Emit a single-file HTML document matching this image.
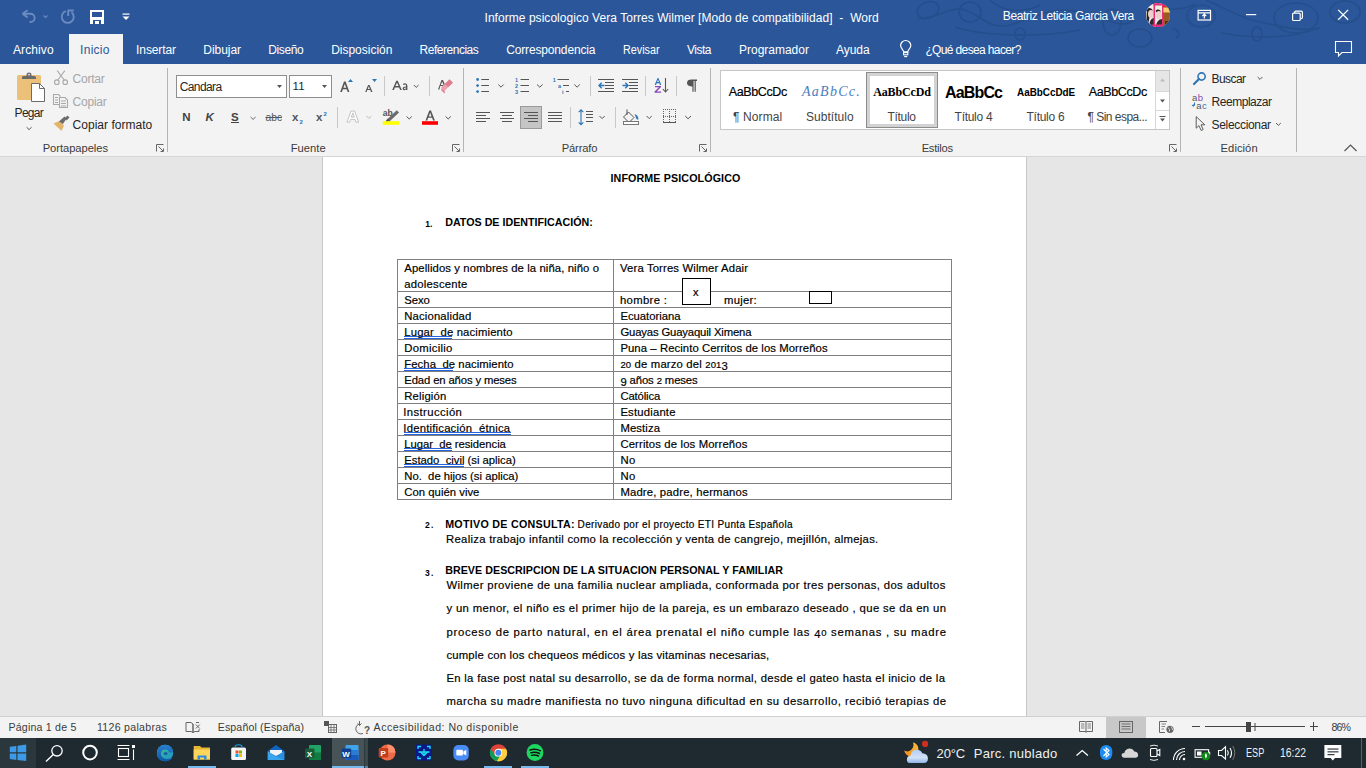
<!DOCTYPE html>
<html><head><meta charset="utf-8"><title>Word</title>
<style>
*{margin:0;padding:0;box-sizing:border-box}
html,body{width:1366px;height:768px;overflow:hidden;background:#E6E6E6;font-family:"Liberation Sans",sans-serif}
.a{position:absolute}
.tx{position:absolute;white-space:pre;line-height:1}
.dk{-webkit-text-stroke:0.18px currentColor}
.sv{position:absolute;overflow:visible}
.os{font-size:84%}
.od{position:relative;top:2.2px}
.oa{font-size:92%}
</style></head><body>
<!-- title bar + tabs -->
<div class="a" style="left:0;top:0;width:1366px;height:64px;background:#2B579A"></div>
<div class="a" style="left:69px;top:34px;width:54px;height:30px;background:#F3F3F3"></div>
<!-- ribbon -->
<div class="a" style="left:0;top:64px;width:1366px;height:92px;background:#F3F3F3"></div>
<div class="a" style="left:0;top:156px;width:1366px;height:1px;background:#D5D5D5"></div>
<!-- page -->
<div class="a" style="left:322px;top:157px;width:705px;height:560px;background:#fff;border-left:1px solid #C6C6C6;border-right:1px solid #C6C6C6"></div>
<!-- status bar -->
<div class="a" style="left:0;top:716px;width:1366px;height:1px;background:#D0D0D0"></div>
<div class="a" style="left:0;top:717px;width:1366px;height:21px;background:#F3F3F3"></div>
<!-- taskbar -->
<div class="a" style="left:0;top:738px;width:1366px;height:30px;background:#1E2A2F"></div>
<!-- ===== QAT ===== -->
<svg class="sv" style="left:0;top:0" width="140" height="34" viewBox="0 0 140 34">
  <g fill="none" stroke="#6A8AC0" stroke-width="1.9" stroke-linejoin="round">
    <path d="M22.5 13.8 L27.6 10.3 M22.5 13.8 L27.6 17.4 M23 13.8 H30.5 A4.1 4.1 0 0 1 30.5 22 H29.5"/>
    <path d="M43.5 15.5 L45.5 17.5 L47.5 15.5" stroke-width="1.3" stroke="#5F84C4"/>
    <path d="M65.8 11.2 A6 6 0 1 0 71.6 12.3"/>
    <path d="M68.2 16 V10.5 H73.8"/>
  </g>
  <g fill="#fff">
    <path d="M90 10 H104 V24 H90 Z M92 12 V17 H102 V12 Z M93 20 V24 H101 V20 Z M95 21 H99 V24 H95 Z" fill-rule="evenodd"/>
    <rect x="122.5" y="13.5" width="7" height="1.2"/>
    <path d="M122.5 16.5 H129.5 L126 20 Z"/>
  </g>
</svg>
<!-- swirl decoration -->
<svg class="sv" style="left:0;top:0" width="1366" height="64" viewBox="0 0 1366 64">
  <g fill="none" stroke="#244C88" stroke-width="1.7" opacity="0.75">
    <ellipse cx="928" cy="10" rx="11" ry="8" transform="rotate(-20 928 10)"/>
    <path d="M918 18 C930 22 950 5 965 10 S990 30 1010 25 S1050 5 1080 12 S1120 30 1135 20"/>
    <ellipse cx="970" cy="12" rx="11" ry="10"/>
    <path d="M955 27 C980 36 1040 38 1080 30"/>
    <ellipse cx="1020" cy="34" rx="5" ry="6"/>
    <path d="M990 0 C1000 10 1020 15 1040 5"/>
    <ellipse cx="1112" cy="22" rx="9" ry="13"/>
    <ellipse cx="1140" cy="38" rx="12" ry="9"/>
    <path d="M1172 28 C1178 30 1182 35 1176 38"/>
    <ellipse cx="1201" cy="16" rx="14" ry="11"/>
    <path d="M1206 0 C1225 8 1240 18 1260 22 S1300 32 1320 28"/>
    <ellipse cx="1257" cy="34" rx="5" ry="7"/>
    <path d="M1221 33 C1250 38 1290 40 1318 28"/>
    <ellipse cx="1296" cy="18" rx="22" ry="15"/>
    <ellipse cx="1345" cy="12" rx="15" ry="11"/>
    <path d="M1150 0 C1160 10 1180 12 1195 4"/>
  </g>
</svg>
<!-- window controls -->
<svg class="sv" style="left:1180px;top:0" width="186" height="34" viewBox="1180 0 186 34">
  <g fill="none" stroke="#fff" stroke-width="1.2">
    <rect x="1198.1" y="10.4" width="12.4" height="9.6"/>
    <path d="M1198 12.8 H1210.6 M1204.3 18.6 V14.2 M1202.3 16.2 L1204.3 14.2 L1206.3 16.2"/>
    <path d="M1246 14.6 H1256.2"/>
    <rect x="1292.6" y="13.1" width="7.6" height="7.4" rx="1"/>
    <path d="M1294.6 13 V12.3 Q1294.6 11.1 1295.8 11.1 H1301.2 Q1302.4 11.1 1302.4 12.3 V17.4 Q1302.4 18.6 1301.2 18.6 H1300.3"/>
    <path d="M1338.2 9.9 L1348.1 19.8 M1348.1 9.9 L1338.2 19.8" stroke-width="1.3"/>
  </g>
</svg>
<!-- avatar -->
<svg class="sv" style="left:1146px;top:3px" width="24" height="24" viewBox="0 0 24 24">
  <defs><clipPath id="av"><circle cx="12" cy="12" r="12"/></clipPath></defs>
  <g clip-path="url(#av)">
    <rect width="24" height="24" fill="#F2E8E4"/>
    <rect x="0" y="0" width="8" height="24" fill="#F4ECE6"/>
    <rect x="9" y="3" width="8" height="5" fill="#EAF2DC"/>
    <rect x="17" y="0" width="7" height="24" fill="#C98A3A"/>
    <rect x="17" y="5" width="7" height="4" fill="#F2D070"/>
    <path d="M17 10 H24 V24 H17 Z" fill="#9A5A22"/>
    <path d="M19 18 H24 V24 H19 Z" fill="#5A2E12"/>
    <path d="M1 6 C3 4 6 5 7 8 L4 12 L2 22 H0 Z" fill="#2A2222"/>
    <ellipse cx="5" cy="11" rx="3" ry="4" fill="#EBCFC8"/>
    <path d="M3 24 C3 19 5 15 8 15 V24 Z" fill="#2E2A30"/>
    <path d="M9.5 8 C11 6 14 6 15 9 L13 12 Z" fill="#2A2222"/>
    <ellipse cx="13" cy="12" rx="3" ry="4" fill="#EBCFC8"/>
    <path d="M10 24 C10 19 13 16 16 16 V24 Z" fill="#2E2A30"/>
    <rect x="7.5" y="0" width="1.6" height="24" fill="#E8307A"/>
    <rect x="16" y="0" width="1.4" height="24" fill="#E8307A"/>
    <rect x="7.5" y="0" width="10" height="2.5" fill="#E8307A"/>
    <rect x="6" y="21.5" width="12" height="3" fill="#E8307A"/>
    <rect x="17" y="0" width="7" height="4" fill="#E02040"/>
  </g>
</svg>
<!-- tabs row icons -->
<svg class="sv" style="left:890px;top:34px" width="30" height="30" viewBox="890 34 30 30">
  <g fill="none" stroke="#fff" stroke-width="1.1">
    <path d="M903.6 51.8 C903.4 49.6 900.6 48.3 900.6 45.6 A5.1 5.1 0 0 1 910.8 45.6 C910.8 48.3 908 49.6 907.8 51.8 Z" stroke-width="1.2"/><rect x="903.6" y="52.6" width="4.2" height="2.2" stroke-width="1.1"/><path d="M904.2 56.6 H907.2" stroke-width="1.2"/>
  </g>
</svg>
<svg class="sv" style="left:1330px;top:36px" width="30" height="26" viewBox="1330 36 30 26">
  <path d="M1335.5 41.5 H1351.5 V52.5 H1342 L1338.5 56 V52.5 H1335.5 Z" fill="none" stroke="#fff" stroke-width="1.1"/>
</svg>
<!-- ===== RIBBON separators & group launchers ===== -->
<div class="a" style="left:167px;top:68px;width:1px;height:84px;background:#B4B4B4"></div>
<div class="a" style="left:463px;top:68px;width:1px;height:84px;background:#B4B4B4"></div>
<div class="a" style="left:710px;top:68px;width:1px;height:84px;background:#B4B4B4"></div>
<div class="a" style="left:1180px;top:68px;width:1px;height:84px;background:#B4B4B4"></div>
<div class="a" style="left:1296px;top:68px;width:1px;height:84px;background:#B4B4B4"></div>
<svg class="sv" style="left:0;top:64px" width="1366" height="92" viewBox="0 64 1366 92">
  <g fill="none" stroke="#666" stroke-width="1">
    <path d="M156.5 151.5 V144.5 H163.5 M158.5 146.5 L163 151 M163.5 148.5 V151.5 H160.5"/>
    <path d="M452.5 151.5 V144.5 H459.5 M454.5 146.5 L459 151 M459.5 148.5 V151.5 H456.5"/>
    <path d="M699.5 151.5 V144.5 H706.5 M701.5 146.5 L706 151 M706.5 148.5 V151.5 H703.5"/>
    <path d="M1169.5 151.5 V144.5 H1176.5 M1171.5 146.5 L1176 151 M1176.5 148.5 V151.5 H1173.5"/>
    <path d="M1344.5 151 L1350.5 145 L1356.5 151" stroke="#555" stroke-width="1.2"/>
  </g>
</svg>
<!-- ===== Clipboard icons ===== -->
<svg class="sv" style="left:0;top:64px" width="170" height="92" viewBox="0 64 170 92">
  <rect x="17" y="75" width="24" height="25" rx="1.5" fill="#EBC179"/>
  <path d="M22 77.5 Q22 76 23.5 76 H26.5 V74.5 Q26.5 72.5 29 72.5 Q31.5 72.5 31.5 74.5 V76 H34.5 Q36 76 36 77.5 V79 H22 Z" fill="#6B6B6B"/>
  <circle cx="29" cy="74.6" r="0.9" fill="#F3F3F3"/>
  <path d="M31.5 83.5 H39.5 L44.5 88.5 V101.5 H31.5 Z" fill="#fff" stroke="#6B6B6B" stroke-width="1"/>
  <path d="M39.5 83.5 V88.5 H44.5" fill="none" stroke="#6B6B6B" stroke-width="1"/>
  <path d="M26.6 127.2 L29.1 129.6 L31.6 127.2" fill="none" stroke="#555" stroke-width="1"/>
  <g fill="none" stroke="#A9A9A9" stroke-width="1.1">
    <circle cx="56.8" cy="82.2" r="2.3"/><circle cx="65.2" cy="82.2" r="2.3"/>
    <path d="M57.8 80 L64.8 70.7 M64.2 80 L57.2 70.7"/>
    <path d="M59 104.5 H53.5 V94.5 H58.5 L60.5 96.5"/><path d="M55 97.5 H58 M55 100 H58 M55 102.5 H58" stroke-width="1"/>
    <path d="M59.5 97.5 H65 L67.5 100 V107.5 H59.5 Z"/><path d="M61 101 H66 M61 103.5 H66 M61 106 H66" stroke-width="1"/>
  </g>
  <path d="M53.5 123.5 L59.5 121 L64 125.5 L61.5 131 Z" fill="#E3B46A"/>
  <path d="M59 121.5 L64.5 116.5 L66.5 118.5 L63 124 Z" fill="#6B6B6B"/>
  <path d="M64.5 118.5 L67.5 115.5 L69.5 117.5 L66.5 120.5 Z" fill="#6B6B6B"/>
</svg>
<!-- ===== Font group ===== -->
<div class="a" style="left:176px;top:75px;width:111px;height:23px;background:#fff;border:1px solid #8E8E8E"></div>
<div class="a" style="left:289px;top:75px;width:43px;height:23px;background:#fff;border:1px solid #8E8E8E"></div>
<svg class="sv" style="left:165px;top:64px" width="300" height="92" viewBox="165 64 300 92">
  <path d="M277 85 H282 L279.5 88 Z M322 85 H327 L324.5 88 Z" fill="#555"/>
  <!-- grow/shrink -->
  <g fill="#555">
    <path d="M340.2 92 L344 81.6 H345.6 L349.4 92 H347.7 L346.7 89.2 H342.9 L341.9 92 Z M343.4 87.8 H346.2 L344.8 83.9 Z"/>
    <path d="M365.2 92 L368.1 85 H369.5 L372.5 92 H371 L370.3 90.1 H367.3 L366.6 92 Z M367.8 88.9 H369.8 L368.8 86.3 Z"/>
    <path d="M392.2 90 L396.2 80.8 H397.8 L401.8 90 H400.1 L399.1 87.5 H394.9 L393.9 90 Z M395.4 86.1 H398.6 L397 82.7 Z"/>
    <path d="M403 84.5 Q403 83.3 405 83.3 Q407.4 83.3 407.4 85.8 V90 H406 V89.2 Q405.3 90.2 404.2 90.2 Q402.6 90.2 402.6 88.3 Q402.6 86.6 406 86.4 V85.8 Q406 84.5 405 84.5 Q404 84.5 403.4 85.1 Z M406 87.5 Q404 87.6 404 88.4 Q404 89.1 404.7 89.1 Q406 89.1 406 87.8 Z"/>
    <path d="M438 89.5 L441.5 80 H443 L446 87 L444.8 87.7 L444 86 H440.3 L439.4 89.5 Z M440.7 84.9 H443.6 L442.2 81.7 Z"/>
  </g>
  <path d="M348 82 L350.5 79 L353 82 Z M372 79 H377 L374.5 82 Z" fill="#2E75B6"/>
  <path d="M444.5 84 L449.5 79.2 L453 82.7 L448 87.5 Z" fill="#E07B8C"/>
  <path d="M441.5 87 L444.5 84 L448 87.5 L445 90.5 Q444 91.5 443 90.5 L441.5 89 Q440.5 88 441.5 87 Z" fill="#E9A2AD"/>
  <path d="M444.3 93.3 L441 90 L442 89 L445.3 92.3 Z" fill="#E07B8C"/>
  <path d="M413.8 85 L416.2 87.4 L418.6 85" fill="none" stroke="#555" stroke-width="1"/>
  <rect x="384" y="76" width="1" height="20" fill="#C8C8C8"/>
  <rect x="429" y="76" width="1" height="20" fill="#C8C8C8"/>
  <rect x="337" y="107" width="1" height="21" fill="#C8C8C8"/>
  <!-- N K S abc x2 x2 -->
  <text x="182.2" y="121" font-family="Liberation Sans" font-weight="700" font-size="11.5" fill="#444">N</text>
  <text x="205.5" y="121" font-family="Liberation Sans" font-weight="700" font-style="italic" font-size="11.5" fill="#444">K</text>
  <text x="231" y="121" font-family="Liberation Sans" font-weight="700" font-size="11.5" fill="#444">S</text>
  <rect x="231" y="122" width="8" height="1" fill="#444"/>
  <path d="M250.6 117 L253.1 119.4 L255.6 117" fill="none" stroke="#666" stroke-width="1"/>
  <text x="265.5" y="121" font-family="Liberation Sans" font-size="10.5" fill="#555" textLength="16.5" lengthAdjust="spacingAndGlyphs">abc</text>
  <rect x="265.5" y="117" width="16.5" height="1" fill="#555"/>
  <text x="292" y="121" font-family="Liberation Sans" font-weight="700" font-size="11.5" fill="#555">x</text>
  <text x="299.5" y="123.5" font-family="Liberation Sans" font-weight="700" font-size="6" fill="#2E75B6">2</text>
  <text x="316" y="121" font-family="Liberation Sans" font-weight="700" font-size="11.5" fill="#555">x</text>
  <text x="323.5" y="115.5" font-family="Liberation Sans" font-weight="700" font-size="6" fill="#2E75B6">2</text>
  <!-- text effects -->
  <path d="M351 111 H354.6 L358.6 122.2 H355.9 L355 119.4 H350.6 L349.7 122.2 H347 Z M351.3 117.2 H354.3 L352.8 112.9 Z" fill="#fff" fill-rule="evenodd" stroke="#BDBDBD" stroke-width="0.9" stroke-linejoin="round"/>
  <path d="M366.5 116 L368.9 118.4 L371.3 116" fill="none" stroke="#BBB" stroke-width="1"/>
  <!-- highlight -->
  <text x="382.8" y="115.8" font-family="Liberation Sans" font-weight="700" font-size="8.6" fill="#555">ab</text>
  <path d="M387 119.5 L396.8 110.2 L399 112.4 L389.2 121.7 Z" fill="#6B6B6B"/>
  <path d="M386.2 120.3 L387.8 118.8 L389.9 120.9 L388.3 122.2 L385.8 121.9 Z" fill="#555"/>
  <rect x="382.7" y="121.2" width="16.3" height="3.6" fill="#FFFF00"/>
  <path d="M406.6 116.5 L409.2 119 L411.8 116.5" fill="none" stroke="#555" stroke-width="1"/>
  <!-- font color -->
  <path d="M425.5 120.6 L429.3 110.6 H431 L434.9 120.6 H433.1 L432.1 117.8 H428.2 L427.2 120.6 Z M428.8 116.4 H431.5 L430.2 112.6 Z" fill="#555"/>
  <rect x="422" y="121.2" width="16" height="3.6" fill="#FF0000"/>
  <path d="M445.6 116.5 L448.2 119 L450.8 116.5" fill="none" stroke="#555" stroke-width="1"/>
</svg>
<!-- ===== Paragraph group ===== -->
<svg class="sv" style="left:463px;top:64px" width="250" height="92" viewBox="463 64 250 92">
  <g fill="#2E75B6">
    <circle cx="477.6" cy="79.5" r="1.4"/><circle cx="477.6" cy="85.6" r="1.4"/><circle cx="477.6" cy="91.6" r="1.4"/>
  </g>
  <g fill="#555">
    <rect x="481.3" y="79" width="7.7" height="1"/><rect x="481.3" y="85" width="7.7" height="1"/><rect x="481.3" y="91" width="7.7" height="1"/>
    <rect x="520.5" y="79" width="8.5" height="1"/><rect x="520.5" y="85" width="8.5" height="1"/><rect x="520.5" y="91" width="8.5" height="1"/>
    <rect x="557.5" y="79" width="11.5" height="1"/><rect x="563" y="85" width="6" height="1"/><rect x="566" y="91" width="3" height="1"/>
  </g>
  <g font-family="Liberation Sans" font-weight="700" font-size="5.5" fill="#2E75B6">
    <text x="515" y="82">1</text><text x="515" y="88">2</text><text x="515" y="94">3</text>
    <text x="552.8" y="82">1</text><text x="558" y="88">a</text><text x="562" y="94">i</text>
  </g>
  <g fill="none" stroke="#555" stroke-width="1">
    <path d="M498.3 84.5 L501 87.2 L503.7 84.5"/>
    <path d="M537 84.5 L539.8 87.2 L542.6 84.5"/>
    <path d="M574.4 84.5 L577.1 87.2 L579.8 84.5"/>
  </g>
  <!-- align row -->
  <rect x="520.5" y="106.5" width="21" height="22" fill="#C5C5C5" stroke="#9A9A9A" stroke-width="1"/>
  <g fill="#555">
    <rect x="476" y="112" width="14" height="1"/><rect x="476" y="115" width="10" height="1"/><rect x="476" y="118" width="14" height="1"/><rect x="476" y="121" width="10" height="1"/>
    <rect x="500" y="112" width="14" height="1"/><rect x="502" y="115" width="10" height="1"/><rect x="500" y="118" width="14" height="1"/><rect x="502" y="121" width="10" height="1"/>
    <rect x="524" y="112" width="14" height="1"/><rect x="528" y="115" width="10" height="1"/><rect x="524" y="118" width="14" height="1"/><rect x="528" y="121" width="10" height="1"/>
    <rect x="548" y="112" width="14" height="1"/><rect x="548" y="115" width="14" height="1"/><rect x="548" y="118" width="14" height="1"/><rect x="548" y="121" width="14" height="1"/>
  </g>
  <rect x="570" y="107" width="1" height="21" fill="#C8C8C8"/>
  <rect x="590" y="76" width="1" height="20" fill="#C8C8C8"/>
  <rect x="645" y="76" width="1" height="20" fill="#C8C8C8"/>
  <rect x="676" y="76" width="1" height="20" fill="#C8C8C8"/>
  <rect x="615" y="107" width="1" height="21" fill="#C8C8C8"/>
  <!-- line spacing -->
  <g fill="none" stroke="#2E75B6" stroke-width="1.1">
    <path d="M581 110 V124.5 M578.7 112.2 L581 109.8 L583.3 112.2 M578.7 122.3 L581 124.7 L583.3 122.3"/>
  </g>
  <g fill="#555"><rect x="586" y="111" width="7" height="1"/><rect x="586" y="114" width="7" height="1"/><rect x="586" y="117" width="7" height="1"/><rect x="586" y="121" width="7" height="1"/></g>
  <path d="M599.5 116 L602.1 118.6 L604.7 116" fill="none" stroke="#555" stroke-width="1"/>
  <!-- indent -->
  <g fill="#555">
    <rect x="598" y="79" width="16" height="1"/><rect x="605" y="82" width="9" height="1"/><rect x="605" y="85" width="9" height="1"/><rect x="605" y="88" width="9" height="1"/><rect x="598" y="91" width="16" height="1"/>
    <rect x="622" y="79" width="16" height="1"/><rect x="629" y="82" width="9" height="1"/><rect x="629" y="85" width="9" height="1"/><rect x="629" y="88" width="9" height="1"/><rect x="622" y="91" width="16" height="1"/>
  </g>
  <g fill="none" stroke="#2E75B6" stroke-width="1.4">
    <path d="M599 85.5 H604.5 M601.7 82.8 L599 85.5 L601.7 88.2"/>
    <path d="M622.5 85.5 H628 M625.3 82.8 L628 85.5 L625.3 88.2"/>
  </g>
  <!-- sort -->
  <path d="M654.6 85 L657.6 78 H658.4 L661.4 85 H660 L659.3 83.2 H656.7 L656 85 Z M657.1 82.1 H658.9 L658 79.7 Z" fill="#2E75B6"/>
  <path d="M655 86 H661 V87.1 L656.7 91.5 H661.1 V92.7 H654.6 V91.6 L658.9 87.2 H655 Z" fill="#8A47B8"/>
  <path d="M665.5 78 V92 M662.8 89 L665.5 92 L668.2 89" fill="none" stroke="#555" stroke-width="1.1"/>
  <!-- pilcrow -->
  <path d="M691.5 79.6 H697 V80.9 H695.8 V91.8 H694.6 V80.9 H693.6 V91.8 H692.4 V86.4 Q687 86.4 687 83 Q687 79.6 691.5 79.6 Z" fill="#555"/>
  <!-- shading -->
  <path d="M628.5 112 L634 117.5 L629 122.5 L623.5 117 Z" fill="none" stroke="#555" stroke-width="1"/>
  <path d="M627 109.5 V115" stroke="#555" stroke-width="1"/>
  <path d="M634.5 114 Q638 115 638.5 119 Q637.5 120 636.5 119 Z" fill="#2E75B6"/>
  <rect x="623.5" y="121.5" width="15" height="3" fill="#fff" stroke="#777" stroke-width="1"/>
  <path d="M646.6 116 L649.2 118.6 L651.8 116" fill="none" stroke="#555" stroke-width="1"/>
  <!-- borders -->
  <g fill="#666"><rect x="663" y="109" width="1" height="1"/><rect x="663" y="116" width="1" height="1"/><rect x="665" y="109" width="1" height="1"/><rect x="665" y="116" width="1" height="1"/><rect x="667" y="109" width="1" height="1"/><rect x="667" y="116" width="1" height="1"/><rect x="669" y="109" width="1" height="1"/><rect x="669" y="116" width="1" height="1"/><rect x="671" y="109" width="1" height="1"/><rect x="671" y="116" width="1" height="1"/><rect x="673" y="109" width="1" height="1"/><rect x="673" y="116" width="1" height="1"/><rect x="675" y="109" width="1" height="1"/><rect x="675" y="116" width="1" height="1"/><rect x="663" y="111" width="1" height="1"/><rect x="669" y="111" width="1" height="1"/><rect x="675" y="111" width="1" height="1"/><rect x="663" y="113" width="1" height="1"/><rect x="669" y="113" width="1" height="1"/><rect x="675" y="113" width="1" height="1"/><rect x="663" y="115" width="1" height="1"/><rect x="669" y="115" width="1" height="1"/><rect x="675" y="115" width="1" height="1"/><rect x="663" y="117" width="1" height="1"/><rect x="669" y="117" width="1" height="1"/><rect x="675" y="117" width="1" height="1"/><rect x="663" y="119" width="1" height="1"/><rect x="669" y="119" width="1" height="1"/><rect x="675" y="119" width="1" height="1"/><rect x="663" y="121" width="1" height="1"/><rect x="669" y="121" width="1" height="1"/><rect x="675" y="121" width="1" height="1"/></g>
  <rect x="663" y="122" width="13" height="1" fill="#555"/>
  <path d="M685.2 116 L688.1 118.8 L691 116" fill="none" stroke="#555" stroke-width="1"/>
</svg>
<!-- ===== Styles gallery ===== -->
<div class="a" style="left:720px;top:70px;width:450px;height:60px;background:#fff;border:1px solid #C6C6C6"></div>
<div class="a" style="left:866px;top:72px;width:72px;height:56px;border:1px solid #8C8C8C;background:#fff"></div>
<div class="a" style="left:867px;top:73px;width:70px;height:54px;border:3px solid #D2D2D2"></div>
<div class="a" style="left:1155px;top:71px;width:1px;height:58px;background:#D6D6D6"></div>
<div class="a" style="left:1156px;top:71px;width:13px;height:20px;background:#E6E6E6"></div>
<div class="a" style="left:1156px;top:91px;width:13px;height:1px;background:#D6D6D6"></div>
<div class="a" style="left:1156px;top:110px;width:13px;height:1px;background:#D6D6D6"></div>
<svg class="sv" style="left:1150px;top:64px" width="30" height="70" viewBox="1150 64 30 70">
  <path d="M1160 81.5 H1165 L1162.5 78.5 Z" fill="#BBB"/>
  <path d="M1160 99.5 H1165 L1162.5 102.5 Z" fill="#555"/>
  <rect x="1159.5" y="116" width="6" height="1" fill="#555"/>
  <path d="M1160 118.5 H1165 L1162.5 121.5 Z" fill="#555"/>
</svg>
<!-- ===== Editing ===== -->
<svg class="sv" style="left:1185px;top:64px" width="100" height="92" viewBox="1185 64 100 92">
  <circle cx="1201.6" cy="76.5" r="3.6" fill="none" stroke="#2E75B6" stroke-width="1.6"/>
  <path d="M1199 79 L1194 84" stroke="#2E75B6" stroke-width="2.2" stroke-linecap="round"/>
  <path d="M1257.6 77 L1260 79.4 L1262.4 77" fill="none" stroke="#555" stroke-width="1"/>
  <text x="1192" y="101.2" font-family="Liberation Sans" font-size="9.5" fill="#555">a</text>
  <text x="1197.8" y="101.2" font-family="Liberation Sans" font-size="9.5" fill="#8A47B8">b</text>
  <text x="1196.3" y="108.6" font-family="Liberation Sans" font-size="9.5" fill="#555">a</text>
  <text x="1202" y="108.6" font-family="Liberation Sans" font-size="9.5" fill="#2E75B6">c</text>
  <path d="M1194.5 102.5 V105.5 H1192.3 M1193.5 104.3 L1192.3 105.5 L1193.5 106.7" fill="none" stroke="#2E75B6" stroke-width="1"/>
  <path d="M1196.2 116.6 V128.2 L1198.9 125.6 L1201.2 130.5 L1203.2 129.5 L1201 124.8 H1204.8 Z" fill="none" stroke="#555" stroke-width="0.95" stroke-linejoin="round"/>
  <path d="M1276 123 L1278.4 125.4 L1280.8 123" fill="none" stroke="#555" stroke-width="1"/>
</svg>
<!-- ===== Document table ===== -->
<div class="a" style="left:397px;top:259px;width:555px;height:241px;border:1px solid #808080"></div>
<div class="a" style="left:613px;top:259px;width:1px;height:241px;background:#808080"></div>
<svg class="sv" style="left:397px;top:259px" width="555" height="241" viewBox="397 259 555 241">
  <g fill="#808080">
    <rect x="397" y="291" width="555" height="1"/><rect x="397" y="307" width="555" height="1"/>
    <rect x="397" y="323" width="555" height="1"/><rect x="397" y="339" width="555" height="1"/>
    <rect x="397" y="355" width="555" height="1"/><rect x="397" y="371" width="555" height="1"/>
    <rect x="397" y="387" width="555" height="1"/><rect x="397" y="403" width="555" height="1"/>
    <rect x="397" y="419" width="555" height="1"/><rect x="397" y="435" width="555" height="1"/>
    <rect x="397" y="451" width="555" height="1"/><rect x="397" y="467" width="555" height="1"/>
    <rect x="397" y="483" width="555" height="1"/>
  </g>
</svg>
<div class="a" style="left:682px;top:278px;width:29px;height:27px;background:#fff;border:1px solid #000"></div>
<div class="a" style="left:809px;top:291px;width:23px;height:13px;background:#fff;border:1px solid #000"></div>
<!-- grammar underlines -->
<div class="a" style="left:404px;top:336px;width:48px;height:1px;background:#2563DA"></div>
<div class="a" style="left:404px;top:338px;width:48px;height:1px;background:#2563DA"></div>
<div class="a" style="left:404px;top:368px;width:49px;height:1px;background:#2563DA"></div>
<div class="a" style="left:404px;top:370px;width:49px;height:1px;background:#2563DA"></div>
<div class="a" style="left:404px;top:432px;width:107px;height:1px;background:#2563DA"></div>
<div class="a" style="left:404px;top:434px;width:107px;height:1px;background:#2563DA"></div>
<div class="a" style="left:404px;top:448px;width:48px;height:1px;background:#2563DA"></div>
<div class="a" style="left:404px;top:450px;width:48px;height:1px;background:#2563DA"></div>
<div class="a" style="left:404px;top:464px;width:60px;height:1px;background:#2563DA"></div>
<div class="a" style="left:404px;top:466px;width:60px;height:1px;background:#2563DA"></div>
<!-- ===== Status bar icons ===== -->
<div class="a" style="left:1106px;top:717px;width:40px;height:21px;background:#C8C8C8"></div>
<svg class="sv" style="left:0;top:716px" width="1366" height="22" viewBox="0 716 1366 22">
  <g fill="none" stroke="#666" stroke-width="1">
    <!-- book x -->
    <path d="M186 722.5 H191 L193 724 V732.5 L191 731.5 H186 Z M193 724 V732.5"/>
    <path d="M196 722.5 H199 M193 732.5 L195 731.5 H199 V729"/>
    <path d="M195.8 724.5 L199.8 728.5 M199.8 724.5 L195.8 728.5"/>
    <!-- macro -->
    <rect x="328.5" y="724.5" width="8" height="8"/>
    <path d="M328.5 727.5 H336.5 M328.5 730 H336.5 M331 724.5 V732.5 M334 724.5 V732.5" stroke-width="0.8"/>
    <!-- accessibility -->
    <path d="M359 724 A5 5 0 1 0 363 733.5" />
    <path d="M359.5 721 V725.5 M357.5 723.5 L359.5 725.5 L361.5 723.5"/>
  </g>
  <rect x="324" y="721" width="5" height="5" fill="#555"/>
  <text x="364" y="734" font-family="Liberation Sans" font-weight="700" font-size="10" fill="#555">?</text>
  <!-- read mode -->
  <g fill="none" stroke="#666" stroke-width="1">
    <path d="M1079.5 721.5 H1085.5 L1086 722 L1086.5 721.5 H1092.5 V731.5 H1086.5 L1086 732.5 L1085.5 731.5 H1079.5 Z M1086 722 V732"/>
    <path d="M1081 724 H1084.5 M1081 726 H1084.5 M1081 728 H1084.5 M1087.5 724 H1091 M1087.5 726 H1091 M1087.5 728 H1091" stroke-width="0.8"/>
    <!-- print layout -->
    <rect x="1119.5" y="721.5" width="13" height="11"/>
    <path d="M1121.5 724 H1130.5 M1121.5 726.5 H1130.5 M1121.5 729 H1130.5" stroke-width="0.9"/>
    <!-- web layout -->
    <path d="M1167 721.5 H1159.5 V732.5 H1165"/>
    <path d="M1161.5 724 H1166 M1161.5 726.5 H1165 M1161.5 729 H1164" stroke-width="0.8"/>
  </g>
  <circle cx="1170" cy="729.3" r="3.6" fill="#666"/>
  <path d="M1168 727.5 Q1170 729 1169.5 731.5 M1171 726.5 Q1172.5 728 1172.5 730" stroke="#F3F3F3" stroke-width="0.8" fill="none"/>
  <rect x="1192" y="726" width="8" height="1" fill="#444"/>
  <rect x="1205" y="726" width="100" height="1" fill="#444"/>
  <rect x="1246" y="722" width="5" height="10" fill="#444"/>
  <rect x="1254.5" y="723" width="1" height="8" fill="#444"/>
  <rect x="1310" y="726" width="8" height="1" fill="#444"/>
  <rect x="1313" y="722" width="1" height="9" fill="#444"/>
</svg>
<!-- ===== Taskbar ===== -->
<div class="a" style="left:0;top:738px;width:36px;height:30px;background:#2A383D"></div>
<div class="a" style="left:332px;top:738px;width:32px;height:30px;background:#485357"></div>
<div class="a" style="left:364px;top:738px;width:1px;height:30px;background:#2E3A3E"></div>
<div class="a" style="left:365px;top:738px;width:3px;height:30px;background:#3C484C"></div>
<div class="a" style="left:365px;top:766px;width:3px;height:2px;background:#5586AD"></div>
<div class="a" style="left:188px;top:766px;width:28px;height:2px;background:#76B9ED"></div>
<div class="a" style="left:332px;top:766px;width:32px;height:2px;background:#76B9ED"></div>
<div class="a" style="left:484px;top:766px;width:28px;height:2px;background:#76B9ED"></div>
<div class="a" style="left:521px;top:766px;width:28px;height:2px;background:#76B9ED"></div>
<svg class="sv" style="left:0;top:738px" width="1366" height="30" viewBox="0 738 1366 30">
  <!-- windows logo -->
  <path d="M9.8 746.8 L16.3 745.9 V752.3 H9.8 Z M17.5 745.7 L26.2 744.5 V752.3 H17.5 Z M9.8 753.5 H16.3 V759.9 L9.8 759 Z M17.5 753.5 H26.2 V761 L17.5 759.9 Z" fill="#3C9AE8"/>
  <!-- search -->
  <circle cx="57" cy="750.8" r="5.2" fill="none" stroke="#fff" stroke-width="1.3"/>
  <path d="M53.3 754.5 L46 761.5" stroke="#fff" stroke-width="1.4"/>
  <!-- cortana -->
  <circle cx="90" cy="752.6" r="6.8" fill="none" stroke="#fff" stroke-width="2"/>
  <!-- task view -->
  <g fill="none" stroke="#fff" stroke-width="1.1">
    <rect x="118.5" y="748.5" width="10" height="8"/>
    <path d="M117.5 745.5 H129.5 M117.5 759.5 H129.5 M133.5 749.5 V760"/>
  </g>
  <rect x="132" y="745" width="3" height="3" fill="#fff"/>
  <!-- edge -->
  <defs>
    <linearGradient id="eg1" x1="0" y1="0" x2="1" y2="1"><stop offset="0" stop-color="#41C777"/><stop offset="1" stop-color="#1B8FD8"/></linearGradient>
    <linearGradient id="eg2" x1="0" y1="0" x2="0" y2="1"><stop offset="0" stop-color="#2A7FD1"/><stop offset="1" stop-color="#0C5AA6"/></linearGradient>
  </defs>
  <circle cx="165" cy="753" r="8.2" fill="url(#eg1)"/>
  <path d="M157 753.5 Q157 761.3 165 761.3 Q169.8 761.3 172.5 757.8 Q167.5 760 163.8 758.2 Q160.6 756.6 161 753 Q161.6 749.6 165.2 749.6 Q168.6 749.8 169 752.6 H173.2 Q172.6 744.8 165 744.8 Q157.2 745 157 753.5 Z" fill="url(#eg2)"/>
  <ellipse cx="165.6" cy="753.6" rx="2" ry="1.7" fill="#1D5FA8"/>
  <!-- explorer -->
  <path d="M193.7 746 H200 L201.5 747.5 H210 V759.5 H193.7 Z" fill="#E7B634"/>
  <rect x="193.7" y="749.5" width="16.3" height="10" fill="#FFD55C"/>
  <path d="M197.5 755.5 H206.5 V759.5 H204 V757.5 H200 V759.5 H197.5 Z" fill="#2D8CDC"/>
  <!-- store -->
  <rect x="231.2" y="747.5" width="14.8" height="12.6" rx="1.5" fill="#F5F5F5"/>
  <path d="M235 747.5 Q235 744.8 238.6 744.8 Q242.2 744.8 242.2 747.5" fill="none" stroke="#1FA3E0" stroke-width="1.1"/>
  <rect x="235.5" y="750.5" width="3" height="3" fill="#F25022"/><rect x="239" y="750.5" width="3" height="3" fill="#7FBA00"/>
  <rect x="235.5" y="754" width="3" height="3" fill="#00A4EF"/><rect x="239" y="754" width="3" height="3" fill="#FFB900"/>
  <!-- mail -->
  <path d="M267.7 751 L276 745 L284.2 751 V760 H267.7 Z" fill="#0F64C0"/>
  <path d="M270 750 H282 V753 L276 756 L270 753 Z" fill="#F2F2F2"/>
  <path d="M267.7 751.3 L276 756.5 L284.2 751.3 V760 H267.7 Z" fill="#3AA4EE"/>
  <path d="M276 756.5 L284.2 751.3 V760 Z" fill="#2A8FE0"/>
  <!-- excel -->
  <rect x="309" y="745" width="12" height="15" rx="1" fill="#21A366"/>
  <rect x="309" y="752.5" width="12" height="7.5" fill="#107C41"/>
  <rect x="305" y="748.5" width="9.5" height="9.5" rx="1" fill="#185C37"/>
  <text x="306.8" y="756.7" font-family="Liberation Sans" font-weight="700" font-size="8" fill="#fff">X</text>
  <!-- word -->
  <rect x="345.5" y="745" width="13" height="15" rx="1" fill="#41A5EE"/>
  <rect x="345.5" y="750" width="13" height="5" fill="#2B7CD3"/>
  <rect x="345.5" y="755" width="13" height="5" fill="#185ABD"/>
  <rect x="341.7" y="748.5" width="9.5" height="9.5" rx="1" fill="#103F91"/>
  <text x="342.3" y="756.7" font-family="Liberation Sans" font-weight="700" font-size="8" fill="#fff">W</text>
  <!-- powerpoint -->
  <circle cx="387.5" cy="752.5" r="8" fill="#ED6C47"/>
  <path d="M387.5 744.5 A8 8 0 0 1 395.5 752.5 H387.5 Z" fill="#FF8F6B"/>
  <rect x="378.7" y="748" width="9.5" height="9.5" rx="1" fill="#C43E1C"/>
  <text x="380.6" y="756.2" font-family="Liberation Sans" font-weight="700" font-size="8" fill="#fff">P</text>
  <!-- scanner app -->
  <rect x="416" y="744.5" width="16" height="16" fill="#0A1A8A"/>
  <g fill="none" stroke="#1EE0F0" stroke-width="1.3">
    <path d="M418 749 V746.5 H421 M427 746.5 H430 V749 M418 756 V758.5 H421 M427 758.5 H430 V756"/>
    <path d="M418.5 752 H429.5 M420.5 752 L424 755.5 L427.5 752 M424 749 V755"/>
  </g>
  <!-- zoom -->
  <rect x="453.4" y="745" width="15.4" height="15.4" rx="5" fill="#4A8CF7"/>
  <rect x="456.3" y="749.8" width="6.6" height="5.8" rx="1" fill="#fff"/>
  <path d="M463.3 751.5 L466.3 749.8 V755.6 L463.3 753.9 Z" fill="#fff"/>
  <!-- chrome -->
  <circle cx="498.3" cy="752.7" r="8.3" fill="#DB4437"/>
  <path d="M498.3 752.7 L490.2 750.3 A8.3 8.3 0 0 0 494.2 760 Z" fill="#0F9D58"/>
  <path d="M498.3 752.7 L494.2 760 A8.3 8.3 0 0 0 506.6 752.7 L506.3 750 Z" fill="#F4B400"/>
  <path d="M498.3 752.7 L490.2 750.3 A8.3 8.3 0 0 1 494 745.7 Z" fill="#DB4437"/>
  <path d="M498.3 752.7 L506.3 750 A8.3 8.3 0 0 1 506.6 752.7 Z" fill="#F4B400"/>
  <path d="M498.3 744.4 A8.3 8.3 0 0 0 490.8 749 L494.5 755 L498.3 748.8 H506 A8.3 8.3 0 0 0 498.3 744.4 Z" fill="#DB4437"/>
  <path d="M490.8 749 A8.3 8.3 0 0 0 497 761 L500.5 754.5 L494.5 755 Z" fill="#0F9D58"/>
  <path d="M497 761 A8.3 8.3 0 0 0 506 748.8 H498.3 L502.2 754.5 Z" fill="#FFCD40"/>
  <circle cx="498.3" cy="752.7" r="3.9" fill="#fff"/>
  <circle cx="498.3" cy="752.7" r="3" fill="#4285F4"/>
  <!-- spotify -->
  <circle cx="535" cy="752.5" r="8.4" fill="#1ED760"/>
  <g fill="none" stroke="#111" stroke-width="1.4" stroke-linecap="round">
    <path d="M530 750 Q535.5 748.3 540.5 750.8"/>
    <path d="M530.8 752.8 Q535.3 751.5 539.5 753.5"/>
    <path d="M531.5 755.4 Q535 754.5 538.5 756"/>
  </g>
  <!-- weather -->
  <defs><linearGradient id="cl" x1="0" y1="0" x2="0" y2="1"><stop offset="0" stop-color="#B4CDF2"/><stop offset="0.6" stop-color="#D2E2F7"/><stop offset="1" stop-color="#8FB2E8"/></linearGradient>
  <linearGradient id="mn" x1="1" y1="0" x2="0" y2="1"><stop offset="0" stop-color="#F8C23A"/><stop offset="1" stop-color="#F38A1C"/></linearGradient></defs>
  <path d="M912.9 742.3 A7.2 7.2 0 1 1 904.2 750.6 A6.4 6.4 0 0 0 912.9 742.3 Z" fill="url(#mn)"/>
  <path d="M909.3 763 Q906.9 763 906.9 759.6 Q906.9 756 910.6 755.6 Q911.3 749.8 916.6 749.8 Q921 749.8 922.3 753.3 Q927.9 753.6 927.9 758.6 Q927.9 763 923.9 763 Z" fill="url(#cl)"/>
  <circle cx="925.1" cy="743.9" r="3.1" fill="#CF2F22"/>
  <!-- chevron up -->
  <path d="M1076.5 755.5 L1082.2 750.5 L1087.9 755.5" fill="none" stroke="#fff" stroke-width="1.3"/>
  <!-- bluetooth -->
  <rect x="1100" y="745" width="12.3" height="15" rx="6" fill="#1C8CF2"/>
  <path d="M1103.5 749 L1109 754.5 L1106.2 757 V748 L1109 750.5 L1103.5 756" fill="none" stroke="#fff" stroke-width="1.1"/>
  <!-- onedrive -->
  <path d="M1124 757.7 Q1121.6 757.7 1121.6 755.3 Q1121.6 753 1124.3 753 Q1125 749 1129.3 748.4 Q1133 748.4 1134.2 751.6 Q1138.1 752 1138.1 755 Q1138.1 757.7 1135.4 757.7 Z" fill="#D7D7D7"/>
  <!-- meet now -->
  <g fill="none" stroke="#fff" stroke-width="1.1">
    <rect x="1150.5" y="748.5" width="6.5" height="8" rx="1"/>
    <path d="M1157 751 L1159.8 749.5 V755.5 L1157 754"/>
    <path d="M1150 746 Q1154 744.3 1158 746 M1150 759.5 Q1154 761.3 1158 759.5" stroke-width="0.9"/>
  </g>
  <!-- wifi -->
  <g fill="none" stroke="#fff" stroke-width="1.1">
    <path d="M1173.5 760 A11.5 11.5 0 0 1 1185 748.5"/>
    <path d="M1176.5 760 A8.5 8.5 0 0 1 1185 751.5"/>
    <path d="M1179.5 760 A5.5 5.5 0 0 1 1185 754.5"/>
  </g>
  <circle cx="1184" cy="759" r="1.3" fill="#fff"/>
  <!-- battery -->
  <rect x="1195.1" y="749.7" width="13.5" height="7.6" fill="none" stroke="#fff" stroke-width="1.1"/>
  <rect x="1197" y="751.5" width="4.5" height="4" fill="#fff"/>
  <rect x="1208.6" y="751.8" width="1.6" height="3.4" fill="#fff"/>
  <circle cx="1205.9" cy="756.2" r="4.1" fill="#0E8A16"/>
  <path d="M1205.9 753.2 Q1208 755.5 1205.9 758.5 Q1203.8 755.5 1205.9 753.2 Z" fill="#fff"/>
  <!-- volume -->
  <path d="M1218.5 750.5 H1221.5 L1225.5 746.8 V759 L1221.5 755.5 H1218.5 Z" fill="none" stroke="#fff" stroke-width="1.1"/>
  <g fill="none" stroke="#fff" stroke-width="1.1">
    <path d="M1227.5 750.3 Q1229 752.9 1227.5 755.5"/>
    <path d="M1230 748 Q1233 752.9 1230 757.8"/>
  </g>
  <path d="M1232.8 746 Q1236.8 752.9 1232.8 759.8" fill="none" stroke="#777" stroke-width="1"/>
  <!-- notifications -->
  <path d="M1324.4 745 H1341.3 V758 H1335 L1332.8 760.5 L1330.6 758 H1324.4 Z" fill="#fff"/>
  <rect x="1327.5" y="748.5" width="11" height="1.1" fill="#1E2A2F"/>
  <rect x="1327.5" y="751.3" width="11" height="1.1" fill="#1E2A2F"/>
  <rect x="1327.5" y="754.1" width="7" height="1.1" fill="#1E2A2F"/>
  <rect x="1361" y="738" width="1" height="30" fill="#56626A"/>
</svg>
<div class="tx" style="left:484.50px;top:11.93px;font-size:12px;color:#ffffff;letter-spacing:0.045px">Informe psicologico Vera Torres Wilmer [Modo de compatibilidad]  -  Word</div>
<div class="tx" style="left:1002.80px;top:9.93px;font-size:12px;color:#ffffff;letter-spacing:-0.407px">Beatriz Leticia Garcia Vera</div>
<div class="tx" style="left:12.90px;top:43.53px;font-size:12px;color:#ffffff;letter-spacing:0.127px">Archivo</div>
<div class="tx" style="left:136.10px;top:43.53px;font-size:12px;color:#ffffff;letter-spacing:-0.112px">Insertar</div>
<div class="tx" style="left:203.30px;top:43.53px;font-size:12px;color:#ffffff;letter-spacing:-0.053px">Dibujar</div>
<div class="tx" style="left:268.30px;top:43.53px;font-size:12px;color:#ffffff;letter-spacing:-0.416px">Diseño</div>
<div class="tx" style="left:331.20px;top:43.53px;font-size:12px;color:#ffffff;letter-spacing:-0.019px">Disposición</div>
<div class="tx" style="left:419.60px;top:43.53px;font-size:12px;color:#ffffff;letter-spacing:-0.483px">Referencias</div>
<div class="tx" style="left:506.20px;top:43.53px;font-size:12px;color:#ffffff;letter-spacing:-0.151px">Correspondencia</div>
<div class="tx" style="left:623.20px;top:43.53px;font-size:12px;color:#ffffff;transform:scaleX(0.8973);transform-origin:0 0">Revisar</div>
<div class="tx" style="left:687.10px;top:43.53px;font-size:12px;color:#ffffff;letter-spacing:-0.547px">Vista</div>
<div class="tx" style="left:739.00px;top:43.53px;font-size:12px;color:#ffffff;letter-spacing:-0.014px">Programador</div>
<div class="tx" style="left:836.00px;top:43.53px;font-size:12px;color:#ffffff;letter-spacing:-0.034px">Ayuda</div>
<div class="tx" style="left:925.40px;top:43.53px;font-size:12px;color:#ffffff;letter-spacing:-0.631px">¿Qué desea hacer?</div>
<div class="tx" style="left:80.10px;top:43.53px;font-size:12px;color:#2B579A;letter-spacing:0.272px">Inicio</div>
<div class="tx" style="left:14.60px;top:106.53px;font-size:12px;color:#262626;letter-spacing:-0.706px">Pegar</div>
<div class="tx" style="left:72.60px;top:73.03px;font-size:12px;color:#A6A6A6;letter-spacing:-0.229px">Cortar</div>
<div class="tx" style="left:72.60px;top:96.03px;font-size:12px;color:#A6A6A6;letter-spacing:-0.231px">Copiar</div>
<div class="tx" style="left:72.60px;top:119.03px;font-size:12px;color:#262626;letter-spacing:0.016px">Copiar formato</div>
<div class="tx" style="left:42.70px;top:142.60px;font-size:11.2px;color:#3b3b3b;letter-spacing:-0.049px">Portapapeles</div>
<div class="tx" style="left:290.70px;top:142.60px;font-size:11.2px;color:#3b3b3b;letter-spacing:0.038px">Fuente</div>
<div class="tx" style="left:561.80px;top:142.60px;font-size:11.2px;color:#3b3b3b;letter-spacing:-0.178px">Párrafo</div>
<div class="tx" style="left:921.70px;top:142.60px;font-size:11.2px;color:#3b3b3b;letter-spacing:-0.276px">Estilos</div>
<div class="tx" style="left:1220.60px;top:142.60px;font-size:11.2px;color:#3b3b3b;letter-spacing:0.055px">Edición</div>
<div class="tx" style="left:179.70px;top:80.83px;font-size:12px;color:#262626;letter-spacing:-0.593px">Candara</div>
<div class="tx" style="left:292.60px;top:81.25px;font-size:11.5px;color:#262626;letter-spacing:-0.8pxtransform:scaleX(0.8577);transform-origin:0 0">11</div>
<div class="tx dk" style="left:728.80px;top:86.22px;font-size:12.5px;color:#000;letter-spacing:-0.398px">AaBbCcDc</div>
<div class="tx" style="left:733.00px;top:110.53px;font-size:12px;color:#444;letter-spacing:0.102px">¶ Normal</div>
<div class="tx" style="left:802.00px;top:85.18px;font-size:14px;color:#4A7EC0;font-family:'Liberation Serif',serif;font-style:italic;letter-spacing:1.274px">AaBbCc.</div>
<div class="tx" style="left:806.00px;top:110.53px;font-size:12px;color:#444;letter-spacing:0.026px">Subtítulo</div>
<div class="tx" style="left:873.20px;top:86.31px;font-size:12px;color:#000;font-weight:700;font-family:'Liberation Serif',serif;letter-spacing:-0.129px">AaBbCcDd</div>
<div class="tx" style="left:887.50px;top:110.53px;font-size:12px;color:#444;letter-spacing:-0.308px">Título</div>
<div class="tx" style="left:945.00px;top:84.51px;font-size:16px;color:#000;font-weight:700;letter-spacing:-0.847px">AaBbCc</div>
<div class="tx" style="left:954.60px;top:110.53px;font-size:12px;color:#444;letter-spacing:-0.292px">Título 4</div>
<div class="tx" style="left:1016.90px;top:86.76px;font-size:11px;color:#000;font-weight:700;transform:scaleX(0.8984);transform-origin:0 0">AaBbCcDdE</div>
<div class="tx" style="left:1026.50px;top:110.73px;font-size:12px;color:#444;letter-spacing:-0.264px">Título 6</div>
<div class="tx dk" style="left:1088.80px;top:85.92px;font-size:12.5px;color:#000;letter-spacing:-0.383px">AaBbCcDc</div>
<div class="tx" style="left:1087.50px;top:110.73px;font-size:12px;color:#444;letter-spacing:-0.529px">¶ Sin espa...</div>
<div class="tx" style="left:1211.60px;top:72.83px;font-size:12px;color:#262626;letter-spacing:-0.590px">Buscar</div>
<div class="tx" style="left:1211.60px;top:95.53px;font-size:12px;color:#262626;letter-spacing:-0.477px">Reemplazar</div>
<div class="tx" style="left:1211.60px;top:118.73px;font-size:12px;color:#262626;letter-spacing:-0.331px">Seleccionar</div>
<div class="tx" style="left:8.50px;top:722.00px;font-size:10.6px;color:#3b3b3b;letter-spacing:0.201px">Página 1 de 5</div>
<div class="tx" style="left:96.90px;top:722.00px;font-size:10.6px;color:#3b3b3b;letter-spacing:0.295px">1126 palabras</div>
<div class="tx" style="left:217.70px;top:722.00px;font-size:10.6px;color:#3b3b3b;letter-spacing:0.141px">Español (España)</div>
<div class="tx" style="left:373.60px;top:722.00px;font-size:10.6px;color:#3b3b3b;letter-spacing:0.473px">Accesibilidad: No disponible</div>
<div class="tx" style="left:1331.50px;top:722.00px;font-size:10.6px;color:#3b3b3b;letter-spacing:-0.892px">86%</div>
<div class="tx" style="left:936.60px;top:746.90px;font-size:13px;color:#f0f0f0;letter-spacing:-0.186px">20°C</div>
<div class="tx" style="left:973.70px;top:746.90px;font-size:13px;color:#f0f0f0;letter-spacing:0.276px">Parc. nublado</div>
<div class="tx" style="left:1246.30px;top:747.13px;font-size:12px;color:#f0f0f0;transform:scaleX(0.7581);transform-origin:0 0">ESP</div>
<div class="tx" style="left:1280.40px;top:747.13px;font-size:12px;color:#f0f0f0;transform:scaleX(0.8631);transform-origin:0 0">16:22</div>
<div class="tx" style="left:610.50px;top:172.81px;font-size:10.7px;color:#000;font-weight:700;letter-spacing:0.120px">INFORME PSICOLÓGICO</div>
<div class="tx" style="left:425.30px;top:219.54px;font-size:8.5px;color:#000;font-weight:700">1.</div>
<div class="tx" style="left:445.20px;top:216.71px;font-size:10.7px;color:#000;font-weight:700;letter-spacing:0.009px">DATOS DE IDENTIFICACIÓN:</div>
<div class="tx dk" style="left:404.30px;top:263.12px;font-size:11.3px;color:#000;letter-spacing:0.102px">Apellidos y nombres de la niña, niño o</div>
<div class="tx dk" style="left:404.30px;top:278.72px;font-size:11.3px;color:#000;letter-spacing:0.216px">adolescente</div>
<div class="tx dk" style="left:404.30px;top:294.62px;font-size:11.3px;color:#000;letter-spacing:-0.055px">Sexo</div>
<div class="tx dk" style="left:404.30px;top:310.62px;font-size:11.3px;color:#000;letter-spacing:0.152px">Nacionalidad</div>
<div class="tx dk" style="left:620.40px;top:310.62px;font-size:11.3px;color:#000;letter-spacing:-0.011px">Ecuatoriana</div>
<div class="tx dk" style="left:404.30px;top:326.62px;font-size:11.3px;color:#000;letter-spacing:0.146px">Lugar  de nacimiento</div>
<div class="tx dk" style="left:620.40px;top:326.62px;font-size:11.3px;color:#000;letter-spacing:-0.150px">Guayas Guayaquil Ximena</div>
<div class="tx dk" style="left:404.30px;top:342.62px;font-size:11.3px;color:#000;letter-spacing:0.270px">Domicilio</div>
<div class="tx dk" style="left:620.40px;top:342.62px;font-size:11.3px;color:#000;letter-spacing:0.081px">Puna – Recinto Cerritos de los Morreños</div>
<div class="tx dk" style="left:404.30px;top:358.62px;font-size:11.3px;color:#000;letter-spacing:0.062px">Fecha  de nacimiento</div>
<div class="tx dk" style="left:620.40px;top:358.62px;font-size:11.3px;color:#000;letter-spacing:0.165px"><span class="os">2</span><span class="os">0</span> de marzo del <span class="os">2</span><span class="os">0</span><span class="os">1</span><span class="od">3</span></div>
<div class="tx dk" style="left:404.30px;top:374.62px;font-size:11.3px;color:#000;letter-spacing:-0.135px">Edad en años y meses</div>
<div class="tx dk" style="left:620.40px;top:374.62px;font-size:11.3px;color:#000;letter-spacing:-0.115px"><span class="od">9</span> años <span class="os">2</span> meses</div>
<div class="tx dk" style="left:404.30px;top:390.62px;font-size:11.3px;color:#000;letter-spacing:0.166px">Religión</div>
<div class="tx dk" style="left:620.40px;top:390.62px;font-size:11.3px;color:#000;letter-spacing:-0.133px">Católica</div>
<div class="tx dk" style="left:403.30px;top:406.62px;font-size:11.3px;color:#000;letter-spacing:0.396px">Instrucción</div>
<div class="tx dk" style="left:620.40px;top:406.62px;font-size:11.3px;color:#000;letter-spacing:0.189px">Estudiante</div>
<div class="tx dk" style="left:403.30px;top:422.62px;font-size:11.3px;color:#000;letter-spacing:0.211px">Identificación  étnica</div>
<div class="tx dk" style="left:620.40px;top:422.62px;font-size:11.3px;color:#000;letter-spacing:0.110px">Mestiza</div>
<div class="tx dk" style="left:404.30px;top:438.62px;font-size:11.3px;color:#000;letter-spacing:-0.041px">Lugar  de residencia</div>
<div class="tx dk" style="left:620.40px;top:438.62px;font-size:11.3px;color:#000;letter-spacing:0.142px">Cerritos de los Morreños</div>
<div class="tx dk" style="left:404.30px;top:454.62px;font-size:11.3px;color:#000;letter-spacing:-0.012px">Estado  civil (si aplica)</div>
<div class="tx dk" style="left:620.40px;top:454.62px;font-size:11.3px;color:#000;letter-spacing:0.442px">No</div>
<div class="tx dk" style="left:404.30px;top:470.62px;font-size:11.3px;color:#000;letter-spacing:-0.009px">No.  de hijos (si aplica)</div>
<div class="tx dk" style="left:620.40px;top:470.62px;font-size:11.3px;color:#000;letter-spacing:0.442px">No</div>
<div class="tx dk" style="left:404.30px;top:486.62px;font-size:11.3px;color:#000;letter-spacing:0.027px">Con quién vive</div>
<div class="tx dk" style="left:620.40px;top:486.62px;font-size:11.3px;color:#000;letter-spacing:0.169px">Madre, padre, hermanos</div>
<div class="tx dk" style="left:620.00px;top:263.12px;font-size:11.3px;color:#000;letter-spacing:0.144px">Vera Torres Wilmer Adair</div>
<div class="tx dk" style="left:620.00px;top:294.72px;font-size:11.3px;color:#000;letter-spacing:0.323px">hombre :</div>
<div class="tx dk" style="left:724.00px;top:294.72px;font-size:11.3px;color:#000;letter-spacing:0.230px">mujer:</div>
<div class="tx dk" style="left:693.00px;top:287.06px;font-size:11px;color:#000">x</div>
<div class="tx" style="left:425.00px;top:521.44px;font-size:8.5px;color:#000;font-weight:700;letter-spacing:1.2px">2.</div>
<div class="tx" style="left:445.20px;top:518.61px;font-size:10.7px;color:#000;font-weight:700;letter-spacing:0.282px">MOTIVO DE CONSULTA:</div>
<div class="tx dk" style="left:577.60px;top:520.20px;font-size:10px;color:#000;letter-spacing:0.340px">Derivado por el proyecto ETI Punta Española</div>
<div class="tx dk" style="left:446.10px;top:534.12px;font-size:11.3px;color:#000;letter-spacing:0.281px">Realiza trabajo infantil como la recolección y venta de cangrejo, mejillón, almejas.</div>
<div class="tx" style="left:425.00px;top:568.84px;font-size:8.5px;color:#000;font-weight:700;letter-spacing:1.2px">3.</div>
<div class="tx" style="left:445.20px;top:564.71px;font-size:10.7px;color:#000;font-weight:700;letter-spacing:0.039px">BREVE DESCRIPCION DE LA SITUACION PERSONAL Y FAMILIAR</div>
<div class="tx dk" style="left:446.40px;top:580.02px;font-size:11.3px;color:#000;letter-spacing:0.378px">Wilmer proviene de una familia nuclear ampliada, conformada por tres personas, dos adultos</div>
<div class="tx dk" style="left:446.40px;top:602.82px;font-size:11.3px;color:#000;letter-spacing:0.383px">y un menor, el niño es el primer hijo de la pareja, es un embarazo deseado , que se da en un</div>
<div class="tx dk" style="left:446.40px;top:626.52px;font-size:11.3px;color:#000;letter-spacing:0.740px">proceso de parto natural, en el área prenatal el niño cumple las <span class="od">4</span><span class="os">0</span> semanas , su madre</div>
<div class="tx dk" style="left:446.40px;top:650.12px;font-size:11.3px;color:#000;letter-spacing:0.206px">cumple con los chequeos médicos y las vitaminas necesarias,</div>
<div class="tx dk" style="left:446.40px;top:672.92px;font-size:11.3px;color:#000;letter-spacing:0.310px">En la fase post natal su desarrollo, se da de forma normal, desde el gateo hasta el inicio de la</div>
<div class="tx dk" style="left:446.40px;top:696.12px;font-size:11.3px;color:#000;letter-spacing:0.485px">marcha su madre manifiesta no tuvo ninguna dificultad en su desarrollo, recibió terapias de</div>
</body></html>
